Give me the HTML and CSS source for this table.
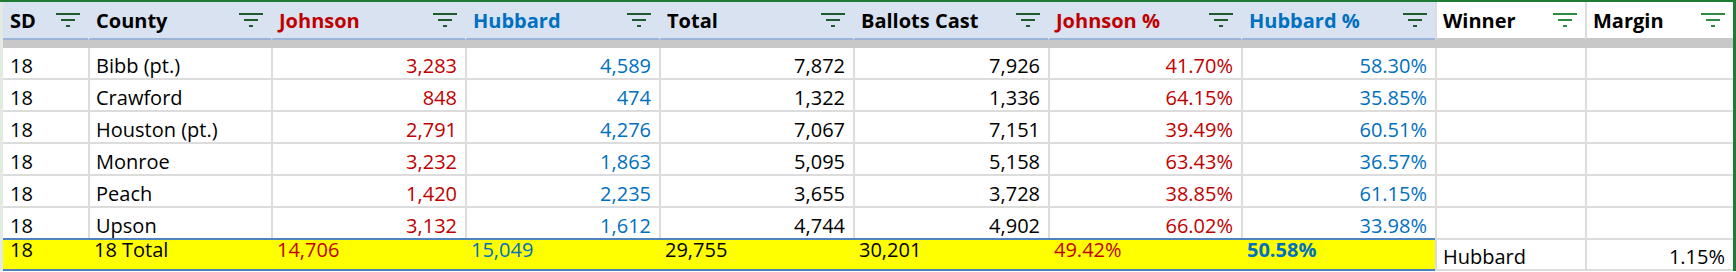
FILE: index.html
```html
<!DOCTYPE html>
<html lang="en">
<head>
<meta charset="utf-8">
<title>SD 18 Results</title>
<link rel="stylesheet" href="styles.css">
</head>
<body>
<div class="sheet">
  <div class="table">
    <div class="row head">
      <div class="hc first"><span>SD</span><svg class="flt" viewBox="0 0 24 14"><rect x="0" y="0" width="24" height="2"/><rect x="5" y="6" width="14" height="2"/><rect x="10" y="12" width="4" height="2"/></svg></div>
      <div class="hc"><span>County</span><svg class="flt" viewBox="0 0 24 14"><rect x="0" y="0" width="24" height="2"/><rect x="5" y="6" width="14" height="2"/><rect x="10" y="12" width="4" height="2"/></svg></div>
      <div class="hc red"><span>Johnson</span><svg class="flt" viewBox="0 0 24 14"><rect x="0" y="0" width="24" height="2"/><rect x="5" y="6" width="14" height="2"/><rect x="10" y="12" width="4" height="2"/></svg></div>
      <div class="hc blue"><span>Hubbard</span><svg class="flt" viewBox="0 0 24 14"><rect x="0" y="0" width="24" height="2"/><rect x="5" y="6" width="14" height="2"/><rect x="10" y="12" width="4" height="2"/></svg></div>
      <div class="hc"><span>Total</span><svg class="flt" viewBox="0 0 24 14"><rect x="0" y="0" width="24" height="2"/><rect x="5" y="6" width="14" height="2"/><rect x="10" y="12" width="4" height="2"/></svg></div>
      <div class="hc"><span>Ballots Cast</span><svg class="flt" viewBox="0 0 24 14"><rect x="0" y="0" width="24" height="2"/><rect x="5" y="6" width="14" height="2"/><rect x="10" y="12" width="4" height="2"/></svg></div>
      <div class="hc red"><span>Johnson %</span><svg class="flt" viewBox="0 0 24 14"><rect x="0" y="0" width="24" height="2"/><rect x="5" y="6" width="14" height="2"/><rect x="10" y="12" width="4" height="2"/></svg></div>
      <div class="hc blue"><span>Hubbard %</span><svg class="flt" viewBox="0 0 24 14"><rect x="0" y="0" width="24" height="2"/><rect x="5" y="6" width="14" height="2"/><rect x="10" y="12" width="4" height="2"/></svg></div>
      <div class="hc plain"><span>Winner</span><svg class="flt" viewBox="0 0 24 14"><rect x="0" y="0" width="24" height="2"/><rect x="5" y="6" width="14" height="2"/><rect x="10" y="12" width="4" height="2"/></svg></div>
      <div class="hc plain"><span>Margin</span><svg class="flt" viewBox="0 0 24 14"><rect x="0" y="0" width="24" height="2"/><rect x="5" y="6" width="14" height="2"/><rect x="10" y="12" width="4" height="2"/></svg></div>
    </div>
    <div class="band"></div>

    <div class="row data">
      <div class="c first">18</div><div class="c">Bibb (pt.)</div>
      <div class="c num red">3,283</div><div class="c num blue">4,589</div>
      <div class="c num">7,872</div><div class="c num">7,926</div>
      <div class="c num red">41.70%</div><div class="c num blue">58.30%</div>
      <div class="c"></div><div class="c"></div>
    </div>
    <div class="row data">
      <div class="c first">18</div><div class="c">Crawford</div>
      <div class="c num red">848</div><div class="c num blue">474</div>
      <div class="c num">1,322</div><div class="c num">1,336</div>
      <div class="c num red">64.15%</div><div class="c num blue">35.85%</div>
      <div class="c"></div><div class="c"></div>
    </div>
    <div class="row data">
      <div class="c first">18</div><div class="c">Houston (pt.)</div>
      <div class="c num red">2,791</div><div class="c num blue">4,276</div>
      <div class="c num">7,067</div><div class="c num">7,151</div>
      <div class="c num red">39.49%</div><div class="c num blue">60.51%</div>
      <div class="c"></div><div class="c"></div>
    </div>
    <div class="row data">
      <div class="c first">18</div><div class="c">Monroe</div>
      <div class="c num red">3,232</div><div class="c num blue">1,863</div>
      <div class="c num">5,095</div><div class="c num">5,158</div>
      <div class="c num red">63.43%</div><div class="c num blue">36.57%</div>
      <div class="c"></div><div class="c"></div>
    </div>
    <div class="row data">
      <div class="c first">18</div><div class="c">Peach</div>
      <div class="c num red">1,420</div><div class="c num blue">2,235</div>
      <div class="c num">3,655</div><div class="c num">3,728</div>
      <div class="c num red">38.85%</div><div class="c num blue">61.15%</div>
      <div class="c"></div><div class="c"></div>
    </div>
    <div class="row data last">
      <div class="c first">18</div><div class="c">Upson</div>
      <div class="c num red">3,132</div><div class="c num blue">1,612</div>
      <div class="c num">4,744</div><div class="c num">4,902</div>
      <div class="c num red">66.02%</div><div class="c num blue">33.98%</div>
      <div class="c"></div><div class="c"></div>
    </div>

    <div class="row total">
      <div class="t first">18</div><div class="t">18 Total</div>
      <div class="t red">14,706</div><div class="t blue">15,049</div>
      <div class="t">29,755</div><div class="t">30,201</div>
      <div class="t red">49.42%</div><div class="t blue bold">50.58%</div>
      <div class="c">Hubbard</div><div class="c num">1.15%</div>
    </div>
  </div>
</div>
</body>
</html>
```

FILE: styles.css
```css
* { box-sizing: border-box; }

html, body {
  margin: 0;
  padding: 0;
  background: #ffffff;
}

body {
  font-family: "Open Sans", Lato, "Liberation Sans", sans-serif;
  font-size: 20px;
  color: #000000;
}

.sheet {
  width: 1736px;
  border-top: 2px solid #1e7b34;
  border-right: 3px solid #1e7b34;
}

.table {
  border-left: 3px solid #e2eae2;
}

.row {
  display: grid;
  grid-template-columns: 85px 183px 194px 194px 194px 195px 193px 194px 150px 148px;
}

/* header */
.hc {
  height: 38px;
  display: flex;
  align-items: center;
  justify-content: space-between;
  padding: 0 8px 0 6px;
  background: #d9e2f1;
  border-left: 2px solid transparent;
  border-bottom: 2px solid #9cb4d8;
  font-weight: 700;
  white-space: nowrap;
}

.hc.first { border-left: 0; padding-left: 7px; }

.hc.plain {
  background: #ffffff;
  border-left: 2px solid #dcdcdc;
  border-bottom: 2px solid #c8c8c8;
}

.flt {
  width: 24px;
  height: 14px;
  flex: none;
  fill: #1d5b2c;
  margin-top: -1px;
}

.hc.plain .flt { fill: #2e8b40; }

.band {
  height: 8px;
  background: #c8c8c8;
}

/* data cells */
.c {
  height: 32px;
  display: flex;
  align-items: flex-end;
  padding: 0 8px 0 6px;
  border-left: 2px solid #dcdcdc;
  border-bottom: 2px solid #dcdcdc;
  white-space: nowrap;
  line-height: 24px;
}

.c.first { border-left: 0; padding-left: 7px; }

.c.num { justify-content: flex-end; }

.data.last .c { height: 30px; border-bottom: 0; }

/* total row */
.t {
  height: 33px;
  display: flex;
  align-items: flex-start;
  padding: 0 8px 0 6px;
  background: #ffff00;
  border-top: 2px solid #4f81bd;
  border-bottom: 2px solid #4f81bd;
  line-height: 20px;
  white-space: nowrap;
}

.t.first { padding-left: 7px; }

.total .c {
  height: 33px;
  border-top: 2px solid #dcdcdc;
  border-bottom: 2px solid #dcdcdc;
}

.red { color: #c00000; }
.blue { color: #0070c0; }
.bold { font-weight: 700; }
```
